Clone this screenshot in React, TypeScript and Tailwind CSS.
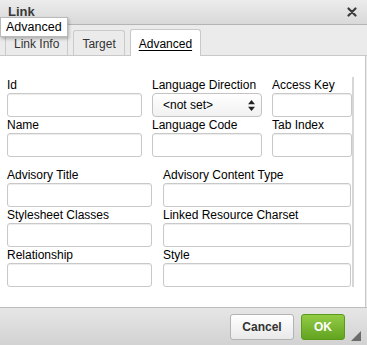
import React from 'react'

const font = { fontFamily: '"Liberation Sans", Arial, sans-serif' }

/* ── Field ───────────────────────────────────────────────────────────────── */
function Field({ label, children }: { label: string; children?: React.ReactNode }) {
  return (
    <div className="flex flex-col">
      <label className="h-4 text-[12px] leading-4 text-black whitespace-nowrap">{label}</label>
      {children ?? (
        <input
          className="h-6 w-full rounded-[3px] border border-[#c9c9c9] bg-white
            shadow-[inset_0_1px_1px_rgba(0,0,0,0.08)] outline-none"
        />
      )}
    </div>
  )
}

function Select() {
  return (
    <div className="relative flex h-6 items-center rounded-[4px] border border-[#c3c3c3]
      bg-gradient-to-b from-white to-[#f1f1f1] pl-[10px] text-[12px] text-black">
      &lt;not set&gt;
      <svg className="absolute right-[6px] top-[6px]" width="7" height="11" viewBox="0 0 7 11">
        <path d="M3.5 0L7 4.3H0z M3.5 11L0 6.7H7z" fill="#222" />
      </svg>
    </div>
  )
}

/* ── Tabs ────────────────────────────────────────────────────────────────── */
function Tab({ label, active }: { label: string; active?: boolean }) {
  return (
    <div
      className={
        active
          ? 'relative -mb-px flex h-[27px] items-center rounded-t-[3px] border border-b-0 border-[#c8c8c8] bg-white px-2 pt-[2px] text-[12px] text-black underline underline-offset-2'
          : 'flex h-[25px] items-center rounded-t-[3px] border border-b-0 border-[#cacaca] bg-[#ebebeb] px-2 pt-[2px] text-[12px] text-[#333]'
      }
    >
      {label}
    </div>
  )
}

export default function App() {
  return (
    <div className="relative flex h-[345px] w-[367px] flex-col overflow-hidden bg-[#ebebeb]" style={font}>
      {/* ── Title bar ─────────────────────────────────────────── */}
      <div className="flex h-[25px] shrink-0 items-center justify-between border-b border-[#b4b4b4]
        bg-gradient-to-b from-[#ececec] to-[#d9d9d9] pl-[8px] pr-[10px]">
        <span className="text-[13px] font-bold text-[#3a3a3a]">Link</span>
        <svg width="10" height="10" viewBox="0 0 10 10">
          <path d="M1.5 1.5L8.5 8.5M8.5 1.5L1.5 8.5" stroke="#3c3c3c" strokeWidth="2.2" strokeLinecap="round" />
        </svg>
      </div>

      {/* ── Tabs ──────────────────────────────────────────────── */}
      <div className="flex h-[31px] shrink-0 items-end gap-[5px] border-b border-[#c8c8c8] pl-[5px] pr-[1px]">
        <Tab label="Link Info" />
        <Tab label="Target" />
        <Tab label="Advanced" active />
      </div>

      {/* ── Content ───────────────────────────────────────────── */}
      <div className="mr-[1px] flex-1 border-r border-[#c8c8c8] bg-white pl-[7px] pt-[21px]">
        <div className="w-[347px] border-r-2 border-[#d6d6d6] pr-[1px]">
          <div className="grid grid-cols-[135px_110px_80px] gap-x-[10px]">
            <Field label="Id" />
            <Field label="Language Direction">
              <Select />
            </Field>
            <Field label="Access Key" />
            <Field label="Name" />
            <Field label="Language Code" />
            <Field label="Tab Index" />
          </div>
          <div className="mt-[10px] grid grid-cols-[145px_188px] gap-x-[11px]">
            <Field label="Advisory Title" />
            <Field label="Advisory Content Type" />
            <Field label="Stylesheet Classes" />
            <Field label="Linked Resource Charset" />
            <Field label="Relationship" />
            <Field label="Style" />
          </div>
        </div>
      </div>

      {/* ── Footer ────────────────────────────────────────────── */}
      <div className="flex h-[38px] shrink-0 items-center justify-end gap-[7px] border-t border-[#bdbdbd]
        bg-gradient-to-b from-[#e6e6e6] to-[#d2d2d2] pr-[22px]">
        <button className="h-[26px] w-[64px] rounded-[3px] border border-[#b3b3b3]
          bg-gradient-to-b from-white to-[#e9e9e9] text-[12px] font-bold text-[#333]">
          Cancel
        </button>
        <button className="h-[26px] w-[44px] rounded-[3px] border border-[#5c9a1c]
          bg-gradient-to-b from-[#92cc45] to-[#62a31f] text-[12px] font-bold text-white">
          OK
        </button>
      </div>

      {/* resize grip */}
      <svg className="absolute bottom-[4px] right-[6px]" width="10" height="10" viewBox="0 0 10 10">
        <path d="M10 0V10H0z" fill="#6b6b6b" />
      </svg>

      {/* tooltip */}
      <div className="absolute left-0 top-[17px] flex h-[20px] items-center border border-[#b9b9b9]
        bg-white px-[5px] text-[12.5px] text-black shadow-[1px_2px_3px_rgba(0,0,0,0.25)]">
        Advanced
      </div>
    </div>
  )
}
